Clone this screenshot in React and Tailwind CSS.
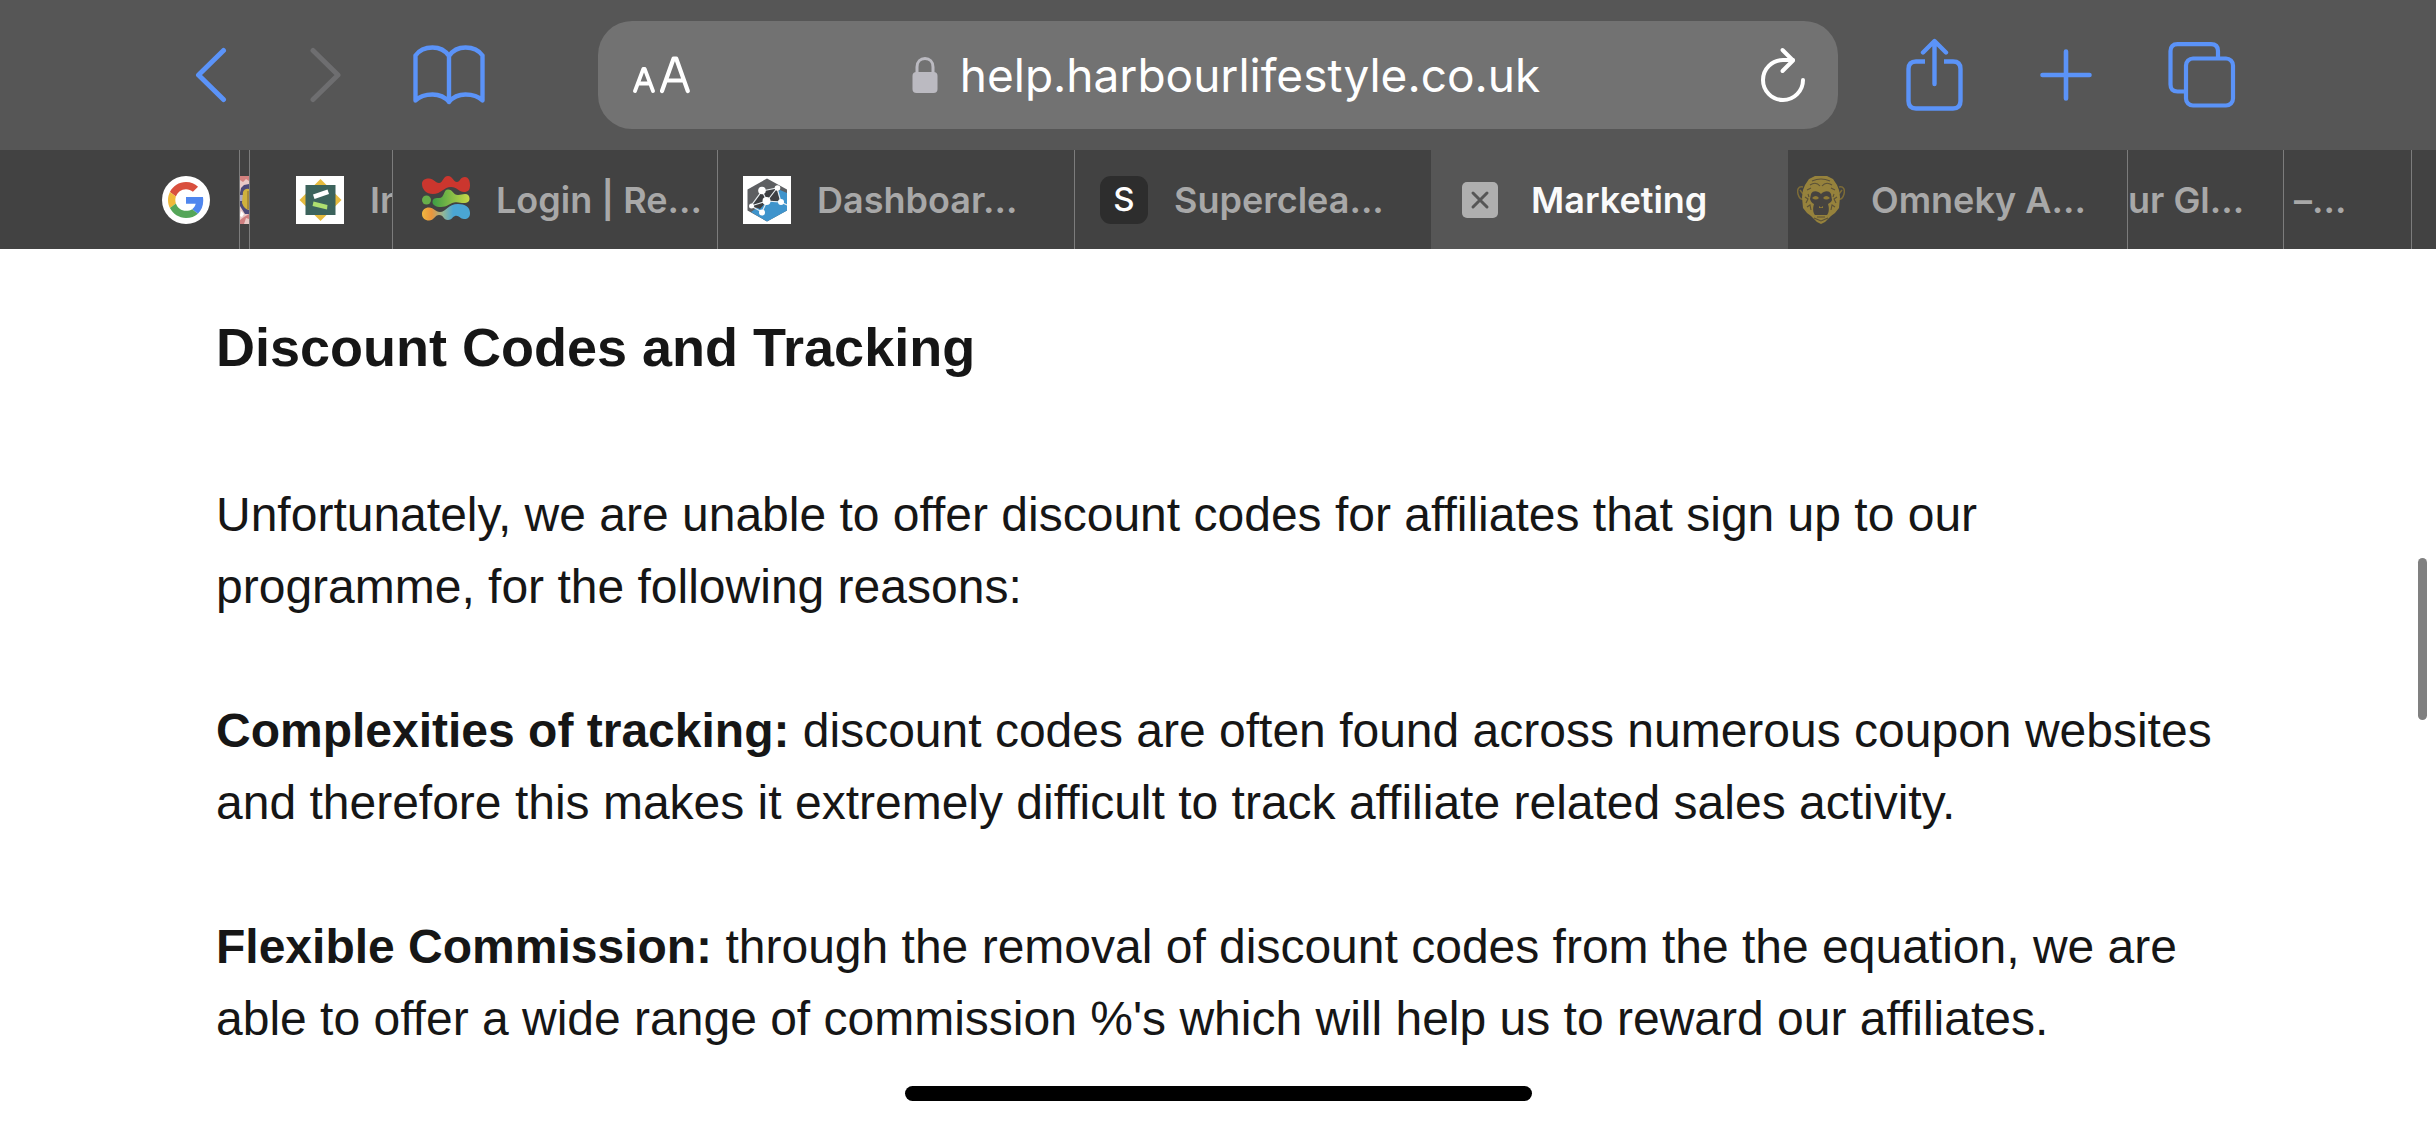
function ToolButton({ label, className, children, disabled }) {
  return (
    <button type="button" aria-label={label} disabled={disabled} className={`shrink-0 ${className}`}>
      {children}
    </button>
  );
}

const stroke = { fill: "none", stroke: "currentColor", strokeLinecap: "round", strokeLinejoin: "round" };

function Chevron({ flip }) {
  return (
    <svg className="block w-8 h-14" viewBox="0 0 32 56" {...stroke} strokeWidth="5">
      <path d={flip ? "M3 3.500 L28 28 L3 52.500" : "M28.500 3.500 L3.500 28 L28.500 52.500"} />
    </svg>
  );
}

function BookIcon() {
  return (
    <svg className="block w-[72px] h-[60px]" viewBox="0 0 72 60" {...stroke} strokeWidth="4.400">
      <path d="M36 11C32 5 26 2.500 19.500 2.500C12.500 2.500 6 5.500 2.500 10.500V55.500C6 52 12 49.500 19.500 49.500C26 49.500 32 52 36 57C40 52 46 49.500 52.500 49.500C60 49.500 66 52 69.500 55.500V10.500C66 5.500 59.500 2.500 52.500 2.500C46 2.500 40 5 36 11ZM36 11V57" />
    </svg>
  );
}

function TextSizeIcon() {
  return (
    <svg className="block w-[58px] h-[38px]" viewBox="0 0 58 38" {...stroke} strokeWidth="3.800">
      <path d="M2 35L10.300 12.800H11.700L20 35M5 27.500H17" />
      <path d="M29 35L40.600 2.500H43.200L54.800 35M33.200 24.500H50.600" strokeWidth="4.200" />
    </svg>
  );
}

function LockIcon() {
  return (
    <svg className="block w-[26px] h-9" viewBox="0 0 26 36">
      <rect x="0.500" y="15" width="25" height="21" rx="4" fill="#bbbac1" />
      <path d="M5 17V10C5 4.500 8.500 1.500 13 1.500S21 4.500 21 10V17" fill="none" stroke="#bbbac1" strokeWidth="3" />
    </svg>
  );
}

function ReloadIcon() {
  return (
    <svg className="block w-11 h-14" viewBox="0 0 44 56" {...stroke} strokeWidth="4">
      <path d="M42 33A20 20 0 1 1 22 13H32" />
      <path d="M21.500 3L32 13.500L21.500 24" />
    </svg>
  );
}

function ShareIcon() {
  return (
    <svg className="block w-[58px] h-[74px]" viewBox="0 0 58 74" {...stroke} strokeWidth="4.400">
      <path d="M19 23.500H10Q2.500 23.500 2.500 31V63Q2.500 70.500 10 70.500H47Q54.500 70.500 54.500 63V31Q54.500 23.500 47 23.500H38" strokeLinecap="butt" />
      <path d="M28.500 46V3.500M17 14.500L28.500 3L40 14.500" />
    </svg>
  );
}

function PlusIcon() {
  return (
    <svg className="block w-[52px] h-[52px]" viewBox="0 0 52 52" {...stroke} strokeWidth="4.600">
      <path d="M26 2.500V49.500M2.500 26H49.500" />
    </svg>
  );
}

function TabsIcon() {
  return (
    <svg className="block w-[68px] h-[66px]" viewBox="0 0 68 66" {...stroke} strokeWidth="4.200">
      <rect x="18" y="16.500" width="47" height="47" rx="7" />
      <path d="M18 49.500H9.500Q2.500 49.500 2.500 42.500V9Q2.500 2.200 9.500 2.200H43Q50 2.200 50 9V16.500" strokeLinecap="butt" />
    </svg>
  );
}

const iconClass = "block w-12 h-12 shrink-0";

function GoogleIcon() {
  return (
    <svg className={iconClass} viewBox="0 0 48 48">
      <circle cx="24" cy="24" r="24" fill="#fff" />
      <g transform="translate(6 6) scale(0.750)">
        <path fill="#d94f3d" d="M24 9.500c3.540 0 6.710 1.220 9.210 3.600l6.850-6.850C35.900 2.380 30.470 0 24 0 14.620 0 6.510 5.380 2.560 13.220l7.980 6.190C12.430 13.720 17.740 9.500 24 9.500z" />
        <path fill="#4f86ee" d="M46.980 24.550c0-1.570-.15-3.090-.38-4.550H24v9.020h12.940c-.58 2.960-2.260 5.480-4.780 7.180l7.730 6c4.510-4.180 7.090-10.360 7.090-17.650z" />
        <path fill="#f0b93a" d="M10.530 28.590c-.48-1.450-.76-2.990-.76-4.590s.27-3.140.76-4.590l-7.980-6.190C.92 16.460 0 20.120 0 24c0 3.880.92 7.540 2.560 10.780l7.970-6.190z" />
        <path fill="#55a659" d="M24 48c6.480 0 11.930-2.130 15.890-5.810l-7.730-6c-2.150 1.450-4.920 2.300-8.160 2.300-6.260 0-11.570-4.220-13.470-9.910l-7.980 6.190C6.510 42.620 14.620 48 24 48z" />
      </g>
    </svg>
  );
}

function CrestIcon() {
  return (
    <svg className="block w-[9px] h-12" viewBox="0 0 9 48">
      <rect width="9" height="48" fill="#e9c9c6" />
      <path d="M0 0H9V5L6 3L3 6L0 4Z" fill="#d4827f" />
      <path d="M1 12L4 9L9 8V38H5L0 30V17Z" fill="#4d4a78" />
      <path d="M0 19H3V25H0Z" fill="#aaa6c8" />
      <path d="M3 16Q5 12 9 13V34Q4 33 2 27Z" fill="#d0b13d" />
      <path d="M7 15H9V33H7Z" fill="#a98b38" />
      <path d="M1 35L4 38L2 41L0 40Z" fill="#fff" />
      <path d="M4 41L9 38V43L6 42L4 48H0V44Z" fill="#cf7f80" />
    </svg>
  );
}

function StarBoardIcon() {
  return (
    <svg className={iconClass} viewBox="0 0 48 48">
      <rect width="48" height="48" fill="#fff" />
      <path d="M24.500 3L45.500 24L24.500 45L3.500 24Z" fill="#e6bb3d" />
      <rect x="9.500" y="9" width="30" height="30" fill="#3c635c" />
      <path d="M17 18.500L31.500 13.500L33 18L18.500 23Z" fill="#fff" />
      <path d="M17.500 25.500L31.500 29L31 33.500L16.500 30Z" fill="#aee070" />
    </svg>
  );
}

function WavesIcon() {
  return (
    <svg className={iconClass} viewBox="0 0 48 48">
      <defs>
        <linearGradient id="waveGreen">
          <stop offset="0" stopColor="#3c9d45" />
          <stop offset="1" stopColor="#c9d948" />
        </linearGradient>
        <linearGradient id="waveBlue">
          <stop offset="0" stopColor="#f0b740" />
          <stop offset="0.200" stopColor="#ea953c" />
          <stop offset="0.450" stopColor="#8fb79a" />
          <stop offset="0.650" stopColor="#4aa6d3" />
        </linearGradient>
      </defs>
      <path d="M0 8C0 4 3 2.500 7 2.500C12 2.500 13 7 17 7C21 7 21 0 26 0C31 0 31 6 35 6C38 6 38 1 43 1C46 1 48 4 48 9C48 14 46 16 42 16C37 16 35 11 29 11C22 11 19 18 11 18C4 18 0 13 0 8Z" fill="#cb362e" />
      <circle cx="4.500" cy="24" r="4.500" fill="#67ae4a" />
      <path d="M10.500 25.500C11 22 14 22 17 22C23 22 21 13.500 26 13.500C31 13.500 31 19 36 19C39 19 40 18 43 18C46 18 47.500 20 47.500 22.500C47.500 26 45 27 42 27C38 27 36 25.500 32 26.500C27 28 25 31 19 31C14 31 10 29 10.500 25.500Z" fill="url(#waveGreen)" />
      <path d="M0 38C0 34 3 31.500 7 31.500C12 31.500 13 36 18 36C24 36 26 28 36 28C43 28 48 31 48 37C48 41 46 43 42 43C38 43 37 39 33 40C30 41 30 44 26 44C21 44 22 39 17 39C13 39 12 44.500 7 44.500C3 44.500 0 42 0 38Z" fill="url(#waveBlue)" />
    </svg>
  );
}

function NetworkIcon() {
  return (
    <svg className={iconClass} viewBox="0 0 48 48">
      <rect width="48" height="48" fill="#fff" />
      <path d="M24 2.500L44 13.500V34.500L24 45.500L4.500 34.500V13.500Z" fill="#5d5f62" />
      <path d="M37 14L44 17V34.500L24 45.500L8 36L24 25Z" fill="#3f94cc" />
      <path d="M19 15L34 12L37 25L24 25L17 33L8 29Z" fill="#3d3f42" />
      <path d="M19 15L34 12L24 25L19 15L8 30L24 25L38 26L34 12M8 30L19 36L24 25M38 26L44 29" stroke="#e8edf0" strokeWidth="1.200" fill="none" />
      <g fill="#fff">
        <circle cx="19" cy="14.500" r="3.800" />
        <circle cx="34.500" cy="12" r="2.800" />
        <circle cx="23.500" cy="25" r="4" />
        <circle cx="38" cy="26" r="3" />
        <circle cx="8.500" cy="30" r="2.500" />
        <circle cx="19" cy="36.500" r="3" />
      </g>
    </svg>
  );
}

function LetterIcon() {
  return (
    <span className="flex w-12 h-12 shrink-0 items-center justify-center rounded-[11px] bg-[#2d2d2d] text-[33px] font-medium leading-none text-white">
      S
    </span>
  );
}

function ApeIcon() {
  return (
    <svg className={iconClass} viewBox="0 0 48 48">
      <path d="M6 11C1 10 0 14 1 18C2 22 4 24 7 23M42 11C47 10 48 14 47 18C46 22 44 24 41 23M3 14L6 18M45 14L42 18" fill="none" stroke="#7d6c37" strokeWidth="1.500" />
      <path d="M18 0H30L36 3L40 9L42 14L43 21L42 32L38 37L34 40L28 46L24 48L20 46L14 40L10 37L6 32L5 21L6 14L8 9L12 3Z" fill="#96823c" />
      <path d="M14 18C16 14 21 15 24 18C27 15 32 14 34 18L35 24C34 27 32 27 31 28C33 34 31 38 30 39H18C17 38 15 34 17 28C15 27 14 26 13 23Z" fill="#464340" />
      <path d="M15 22Q19 18 22 22Q19 25 15 22ZM26 22Q29 18 33 22Q29 25 26 22ZM22 30L24 31.500L26 30V32H22Z" fill="#8f7a35" />
      <g fill="none" stroke="#5b5138" strokeWidth="1.100">
        <path d="M15 5Q24 1 33 5M13 9Q19 5 23 10M35 9Q29 5 25 10M10 14L14 12M38 14L34 12M8 21L11 23L9 27M40 21L37 23L39 27M10 31L13 29L14 34M38 31L35 29L34 34M17 42L24 45L31 42M20 41H28M11 18L12 21M37 18L36 21" />
      </g>
    </svg>
  );
}

function Tab({ icon, title, line = true, inner = "" }) {
  return (
    <div className={`min-w-0 overflow-hidden ${line ? "border-r border-[#7c7c7c]" : ""}`}>
      <a href="#tab" className={`flex h-full items-center gap-[26px] whitespace-nowrap ${inner}`}>
        {icon}
        {title && <span>{title}</span>}
      </a>
    </div>
  );
}

export default function App() {
  return (
    <div className="min-h-screen bg-white font-['Inter',sans-serif]">
      <header>
        <div className="flex h-[150px] items-center bg-[#565656] pl-[195px] pr-[200px] text-[#5b93f8]">
          <ToolButton label="Back" className="mr-[83px]"><Chevron /></ToolButton>
          <ToolButton label="Forward" disabled className="mr-[71px] text-[#6e6e70]"><Chevron flip /></ToolButton>
          <ToolButton label="Bookmarks" className="mr-[113px]"><BookIcon /></ToolButton>
          <div className="flex h-[108px] min-w-0 flex-1 items-center justify-between rounded-[34px] bg-[#727272] pl-[35px] pr-[33px] text-white">
            <ToolButton label="Page settings" className=""><TextSizeIcon /></ToolButton>
            <button type="button" className="flex items-center gap-[22px] text-[46px] leading-[60px]">
              <LockIcon />
              <span>help.harbourlifestyle.co.uk</span>
            </button>
            <ToolButton label="Reload" className=""><ReloadIcon /></ToolButton>
          </div>
          <ToolButton label="Share" className="ml-[68px]"><ShareIcon /></ToolButton>
          <ToolButton label="New tab" className="mx-[76px]"><PlusIcon /></ToolButton>
          <ToolButton label="Show tabs" className=""><TabsIcon /></ToolButton>
        </div>
        <nav aria-label="Open tabs" className="grid h-[99px] grid-cols-[240fr_10fr_143fr_325fr_357fr_356fr_357fr_340fr_156fr_128fr_24fr] bg-[#424242] text-[36px] font-semibold text-[#a8a8a8]">
          <Tab icon={<GoogleIcon />} inner="pl-[162px]" />
          <Tab icon={<CrestIcon />} />
          <Tab icon={<StarBoardIcon />} title="In" inner="pl-[46px]" />
          <Tab icon={<WavesIcon />} title="Login | Re..." inner="pl-[29px]" />
          <Tab icon={<NetworkIcon />} title="Dashboar..." inner="pl-[25px]" />
          <Tab icon={<LetterIcon />} title="Superclea..." inner="pl-[25px]" line={false} />
          <div className="flex min-w-0 items-center gap-[33px] overflow-hidden bg-[#565656] pl-[31px] text-[#fafafa]">
            <button type="button" aria-label="Close tab" className="shrink-0">
              <svg className="block w-9 h-9" viewBox="0 0 36 36">
                <rect width="36" height="36" rx="5" fill="#afafaf" />
                <path d="M11 11L25 25M25 11L11 25" stroke="#565656" strokeWidth="3" strokeLinecap="round" />
              </svg>
            </button>
            <a href="#tab" aria-current="page">Marketing</a>
          </div>
          <Tab icon={<ApeIcon />} title="Omneky A..." inner="pl-[9px]" />
          <Tab title="ur Gl..." />
          <Tab title="–..." inner="pl-[10px]" />
          <Tab line={false} />
        </nav>
      </header>
      <div className="relative">
        <main className="px-[216px] pt-[58px] font-['Liberation_Sans',Arial,sans-serif] text-[48px] leading-[72px] text-[#161616]">
          <h2 className="mb-[91px] text-[54px] font-bold leading-[81px]">Discount Codes and Tracking</h2>
          <div className="flex flex-col gap-[72px]">
            <p>Unfortunately, we are unable to offer discount codes for affiliates that sign up to our programme, for the following reasons:</p>
            <p>
              <strong>Complexities of tracking:</strong> discount codes are often found across numerous coupon websites and therefore this makes it extremely difficult to track affiliate related sales activity.
            </p>
            <p>
              <strong>Flexible Commission:</strong> through the removal of discount codes from the the equation, we are able to offer a wide range of commission %'s which will help us to reward our affiliates.
            </p>
          </div>
        </main>
        <div className="absolute right-[9px] top-[309px] h-[162px] w-[9px] rounded-full bg-[#808080]" />
        <div className="pb-6 pt-[31px]">
          <div className="mx-auto h-[15px] w-[627px] rounded-full bg-black" />
        </div>
      </div>
    </div>
  );
}
